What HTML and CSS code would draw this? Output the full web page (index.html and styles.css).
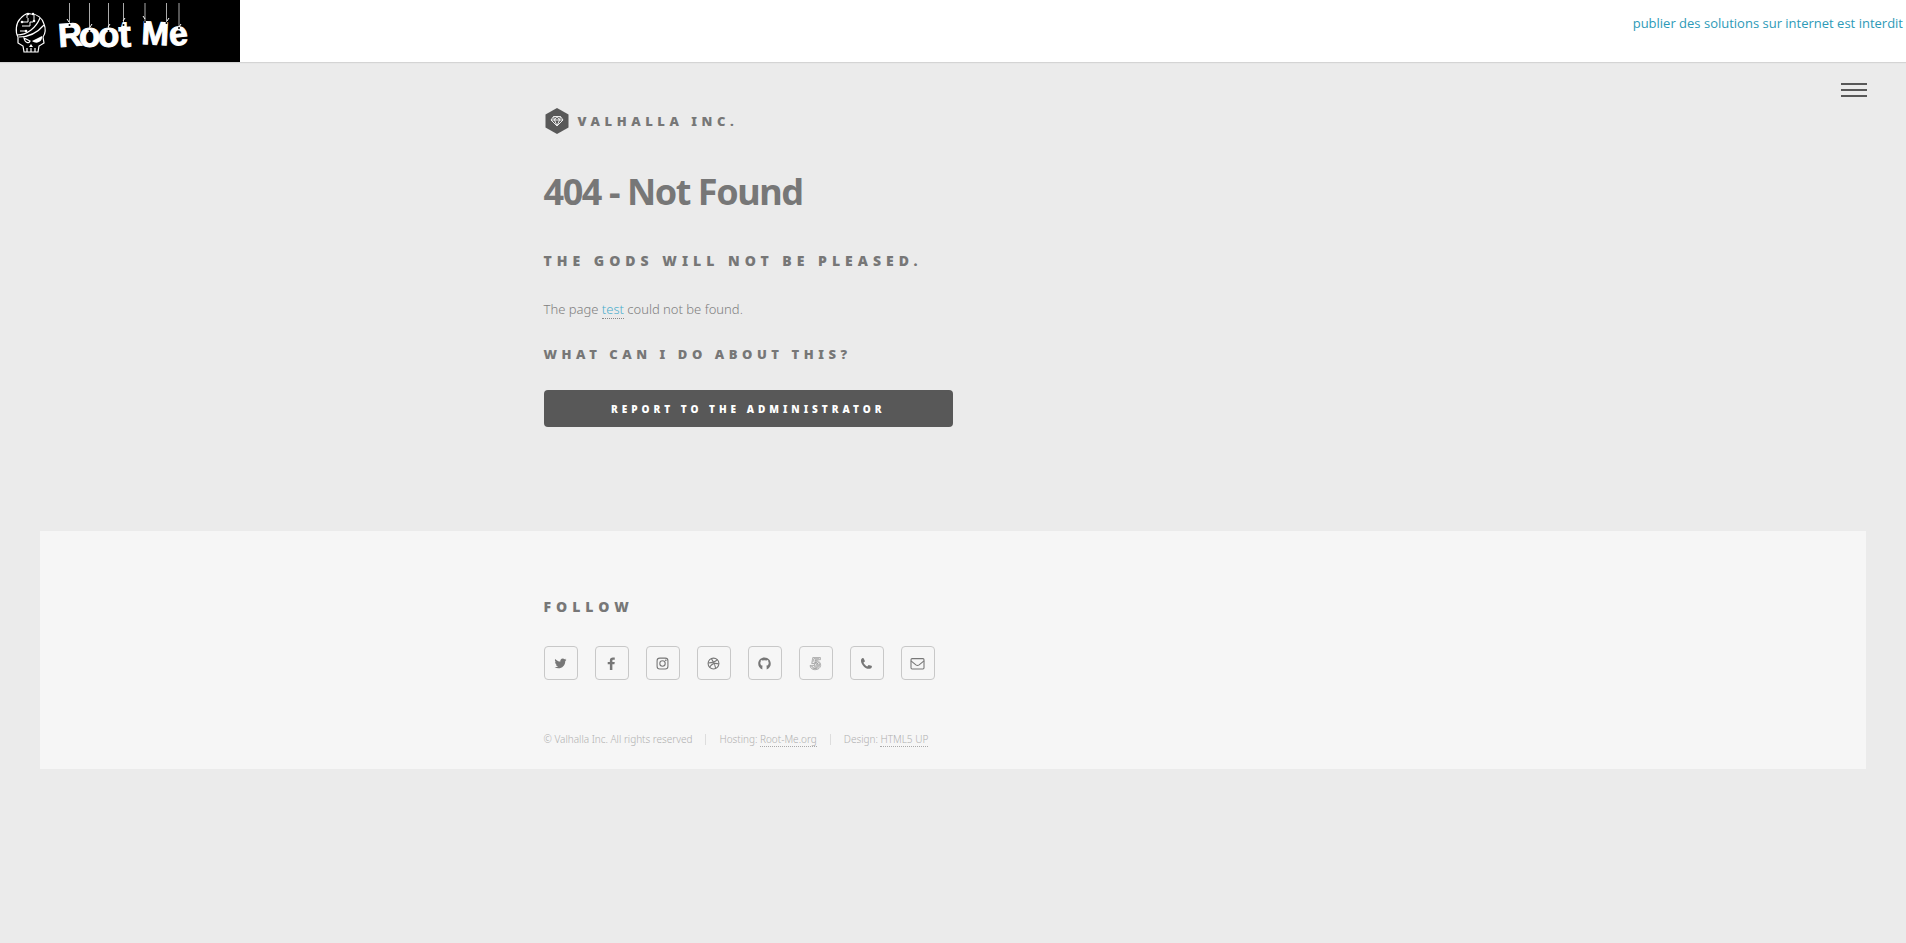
FILE: index.html
```html
<!DOCTYPE html>
<html lang="en">
<head>
<meta charset="utf-8">
<title>Valhalla Inc. - 404</title>
<link rel="stylesheet" href="styles.css">
</head>
<body>
<div class="hostbar">
  <a class="hostbar-logo" href="#" aria-label="Root Me">
    <svg width="240" height="62" viewBox="0 0 240 62" aria-hidden="true">
      <g fill="none" stroke="#fff" stroke-width="1.2">
        <path d="M18 37C15 32 16 23 20 19C24 14 28 13 31 14C37 14 42 18 44 24C46 29 45 34 43 37L44 43L39 46L38 52H24L23 46L18 43Z"/>
        <path d="M17 35C27 35 36 28 40 18M19 37C29 37 38 32 44 25M27 48V52M31 48V52M35 48V52"/>
        <path d="M20 31H26M22 22H28V18M22 26H30V22H33M34 15V21M27 15V18" stroke-width="1"/>
        <path d="M24 38L30 41C29 44 25 43 24 38Z"/>
      </g>
      <g fill="#fff"><path d="M32 41L42 36C43 41 37 45 32 41ZM31 44L33 47H29Z"/><circle cx="26" cy="31" r="1.3"/><circle cx="22" cy="22" r="1.3"/><circle cx="34" cy="21" r="1.3"/><circle cx="28" cy="14" r="1.3"/><circle cx="33" cy="14" r="1.3"/></g>
      <g stroke="#aaa" stroke-width="1"><path d="M69.500 3V24M89.500 3V30M108.500 3V30M123.500 3V24M145 3V21M166.500 3V22M179 3V28"/></g>
      <g class="wordmark">
        <text x="59" y="47" font-size="33" transform="rotate(-4 59 47)">R</text>
        <text x="79" y="47" font-size="35">o</text>
        <text x="98" y="47" font-size="35">o</text>
        <text x="119" y="47" font-size="37" transform="rotate(-2 119 47)">t</text>
        <text x="141" y="44" font-size="33" transform="rotate(3 141 44)">M</text>
        <text x="170" y="46" font-size="34" transform="rotate(-6 170 46)">e</text>
      </g>
      <g fill="#000"><circle cx="69.500" cy="25" r="1"/><circle cx="89.500" cy="31" r="1"/><circle cx="108.500" cy="31" r="1"/><circle cx="123.500" cy="25" r="1"/><circle cx="145" cy="22" r="1"/><circle cx="166.500" cy="23" r="1"/><circle cx="179" cy="28" r="1"/></g>
      <path d="M67 19l2 3M92 24l-2 3M110 24l-2 3M125 18l-2 3M143 16l2 3M169 18l-2 3M181 24l-2 3" stroke="#fff" fill="none"/>
    </svg>
  </a>
  <a class="hostbar-note" href="#">publier des solutions sur internet est interdit</a>
</div>

<header class="site-header">
  <div class="inner">
    <a class="brand" href="#">
      <svg width="26" height="28" viewBox="0 0 26 28" aria-hidden="true">
        <path fill="#585858" d="M13 1L24.500 7.500V20.500L13 27L1.500 20.500V7.500Z"/>
        <path fill="none" stroke="#ebebeb" stroke-width="1" stroke-linejoin="round" d="M9.500 9.500H16.500L19 13L13 19L7 13ZM7 13H19M9.500 9.500L10.500 13L13 19L15.500 13L16.500 9.500M10.500 13L13 9.500L15.500 13"/>
      </svg>
      <span>Valhalla Inc.</span>
    </a>
  </div>
  <button class="menu-toggle" type="button" aria-label="Menu"><i></i><i></i><i></i></button>
</header>

<main class="inner">
  <h1>404 - Not Found</h1>
  <h2>The gods will not be pleased.</h2>
  <p>The page <a href="#">test</a> could not be found.</p>
  <h3>What can I do about this?</h3>
  <button class="report" type="button">Report to the administrator</button>
</main>

<footer class="site-footer">
  <div class="inner">
    <h2>Follow</h2>
    <ul class="social">
      <li><a href="#" aria-label="Twitter"><svg viewBox="0 0 24 24"><path d="M23 5c-.8.4-1.700.6-2.600.7 1-.5 1.600-1.400 2-2.500-1 .5-1.900.9-2.900 1.100A4.600 4.600 0 0 0 11.700 8.500C8 8.300 4.600 6.500 2.300 3.600c-1.200 2-.6 4.700 1.400 6-.7 0-1.400-.2-2-.5 0 2.200 1.500 4 3.600 4.500-.7.200-1.400.2-2 .1.600 1.800 2.200 3.100 4.200 3.200C5.600 18.400 3.300 19 1 18.800c8.900 5.300 20-.1 19.800-11.400C21.700 6.700 22.400 5.900 23 5Z"/></svg></a></li>
      <li><a href="#" aria-label="Facebook"><svg viewBox="0 0 24 24"><path d="M18 1v4h-2.400c-1.600 0-2 .8-2 1.900V9H18l-.6 4.300h-3.800V24H9V13.300H5V9h4V6c0-3.500 2.200-5.300 5.500-5.300 1.500 0 2.900.1 3.500.3Z"/></svg></a></li>
      <li><a href="#" aria-label="Instagram"><svg viewBox="0 0 24 24" class="line"><rect x="2" y="2" width="20" height="20" rx="5"/><circle cx="12" cy="12" r="5"/><circle cx="18" cy="6" r=".6"/></svg></a></li>
      <li><a href="#" aria-label="Dribbble"><svg viewBox="0 0 24 24" class="line"><circle cx="12" cy="12" r="10"/><path d="M8 3c4 5 7 11 8 18M2 11c7 0 13-1 17-6M5 19c3-6 9-9 17-6"/></svg></a></li>
      <li><a href="#" aria-label="GitHub"><svg viewBox="0 0 24 24"><path d="M8 23C-4 18.500-1 1 12 1s16 17.500 4 22v-5c0-1-.3-1.500-.8-2 2.800-.4 4.500-2 4.500-5 0-1.500-.5-2.200-1-3 .2-.8.200-1.700-.2-2.600-1.300 0-2 .6-2.900 1.200a13 13 0 0 0-7.200 0C7.500 6 6.800 5.400 5.500 5.400c-.4.900-.4 1.800-.2 2.600-.5.800-1 1.500-1 3 0 3 1.700 4.600 4.500 5-.4.400-.8 1-.8 1.700Z"/></svg></a></li>
      <li><a href="#" aria-label="500px"><svg viewBox="0 0 24 24" class="fine"><path d="M21 1H7L5 12h4c1-1.500 3-2 4.500-1.500 4.500 1.500 3 8-1 8-2.500 0-3.500-1.500-3.500-3H2c0 5 4 8 9 8 13 0 14-15 3-17l-3 .5L11.500 5H21ZM19 3H9L7 10M4 17c2 6 12 6 15 0 2-6-3-10-9-8M6 17c2 5 9 4 11 0 1-5-3-8-8-5"/><circle cx="12" cy="14.500" r="2"/></svg></a></li>
      <li><a href="#" aria-label="Phone"><svg viewBox="0 0 24 24"><path d="M22 17c0 2-1 3.500-2.500 4.200C11 25 0 12 2 5c.5-2 2.500-3 4-3 .8 0 3 5 3 5.800 0 1-2.600 2-2.600 3 0 1.300 5.500 6.700 6.800 6.700 1 0 2-2.600 3-2.600.8 0 5.800 1.600 5.800 2.100Z"/></svg></a></li>
      <li><a href="#" aria-label="Email"><svg viewBox="0 0 24 24" class="line"><rect x="0" y="3" width="24" height="19" rx="2"/><path d="M0 7L9 14.500C11 16 13 16 15 14.500L24 7"/></svg></a></li>
    </ul>
    <ul class="copyright">
      <li>© Valhalla Inc. All rights reserved</li>
      <li>Hosting: <a href="#">Root-Me.org</a></li>
      <li>Design: <a href="#">HTML5 UP</a></li>
    </ul>
  </div>
</footer>
</body>
</html>
```

FILE: styles.css
```css
* { box-sizing: border-box; }
body {
  margin: 0;
  background: #ebebeb;
  color: #808080;
  font: 300 13px/24px "Noto Sans", sans-serif;
}
h1, h2, h3, p, ul { margin: 0; padding: 0; }
ul { list-style: none; }
a { color: inherit; text-decoration: none; }

.hostbar {
  display: flex;
  justify-content: space-between;
  background: #fff;
  box-shadow: 0 1px 1px #d4d4d4;
}
.hostbar-logo { display: flex; background: #000; }
.wordmark { fill: #fff; stroke: #fff; stroke-width: 1; font-family: "Liberation Sans", sans-serif; font-weight: 700; }
.hostbar-note {
  padding: 11px 3px;
  color: #2d9ab7;
  font: 400 13px/24px "Open Sans", sans-serif;
}

.inner { width: 819px; max-width: 90%; margin: 0 auto; }
.site-header { position: relative; padding-top: 44px; }
.brand {
  display: flex;
  align-items: center;
  gap: 8px;
  height: 30px;
  color: #777;
  font-weight: 900;
  letter-spacing: .35em;
  text-transform: uppercase;
}
.menu-toggle {
  position: absolute;
  top: 21px;
  right: 39px;
  display: flex;
  flex-direction: column;
  gap: 4px;
  padding: 0;
  border: 0;
  background: none;
}
.menu-toggle i { width: 26px; height: 2px; background: #585858; }

h1 {
  padding-top: 32px;
  color: #777;
  font-size: 36px;
  font-weight: 700;
  line-height: 48px;
  letter-spacing: -.04em;
}
h2, h3 { color: #777; font-weight: 900; text-transform: uppercase; letter-spacing: .35em; }
h2 { font-size: 14px; letter-spacing: 5px; }
h3 { font-size: 13px; }
main h2 { padding-top: 33px; }
main p { padding: 24px 0 21px; }
main p a { color: #4cadcb; border-bottom: 1px dotted #888; }
.report {
  display: block;
  width: 50%;
  height: 37px;
  margin: 24px 0 104px;
  padding: 0;
  border: 0;
  border-radius: 4px;
  background: #585858;
  color: #fff;
  font: 900 10px/36px "Noto Sans", sans-serif;
  letter-spacing: 4px;
  text-transform: uppercase;
}

.site-footer { margin: 0 40px; padding: 64px 0 18px; background: #f6f6f6; }
.social { display: flex; gap: 17px; padding: 27px 0 47px; }
.social a {
  display: flex;
  align-items: center;
  justify-content: center;
  width: 34px;
  height: 34px;
  border: 1px solid #c8c8c8;
  border-radius: 4px;
}
.social svg { width: 13px; height: 13px; overflow: visible; fill: #777; }
.social .line { fill: none; stroke: #777; stroke-width: 2; }
.social .fine { fill: none; stroke: #777; stroke-width: 1; }
.copyright { display: flex; color: #b0b0b0; font-size: 10px; }
.copyright li + li::before {
  content: "";
  display: inline-block;
  height: 11px;
  margin: 0 13px;
  border-left: 1px solid #ddd;
  vertical-align: -2px;
}
.copyright a { border-bottom: 1px dotted #aaa; }
```
